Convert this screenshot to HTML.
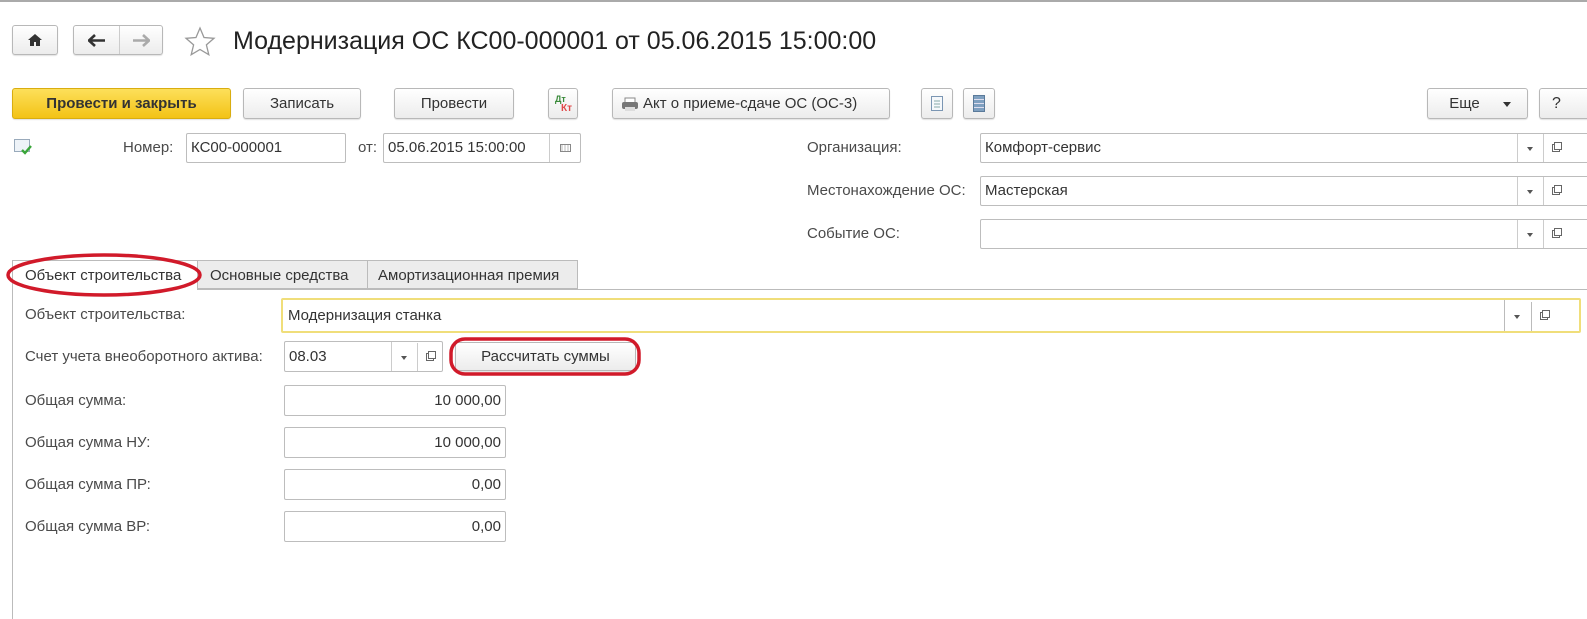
<!DOCTYPE html>
<html><head><meta charset="utf-8"><style>
*{box-sizing:border-box;margin:0;padding:0}
body{width:1587px;height:616px;background:#fff;font-family:"Liberation Sans",Arial,sans-serif;color:#333;font-size:15px;position:relative;overflow:hidden}
.a{position:absolute}
.btn{position:absolute;border:1px solid #b8b8b8;border-radius:3px;background:linear-gradient(#fff,#ececec);text-align:center;color:#333;box-shadow:0 1px 1px rgba(0,0,0,.12)}
.inp{position:absolute;border:1px solid #bdbdbd;border-radius:2px;background:#fff;padding-left:4px;color:#333}
.lbl{position:absolute;color:#4a4a4a}
.dd{position:absolute;top:0;bottom:0;border-left:1px solid #ccc;width:25px}
.dd:after{content:"";position:absolute;left:9px;top:50%;margin-top:-1px;border:3px solid transparent;border-top:4px solid #555}
.op{position:absolute;top:0;bottom:0;border-left:1px solid #ccc;width:24px}
.op:before{content:"";position:absolute;left:8px;top:10px;width:6px;height:6px;border:1px solid #666}
.op:after{content:"";position:absolute;left:10px;top:8px;width:6px;height:6px;border:1px solid #666;background:#fff}
</style></head><body>
<div class="a" style="left:0;top:0;width:1587px;height:2px;background:#aaa"></div>
<div class="btn" style="left:12px;top:25px;width:46px;height:30px"><svg width="16" height="14" viewBox="0 0 16 14" style="margin-top:7px"><path d="M8 1L1 7h2v6h4V9h2v4h4V7h2z" fill="#333"/></svg></div>
<div class="btn" style="left:73px;top:25px;width:90px;height:30px"><span style="position:absolute;left:45px;top:0;bottom:0;border-left:1px solid #ccc"></span>
<svg class="a" style="left:14px;top:8px" width="18" height="13"><path d="M1 6.5h16M7 1L1 6.5 7 12" stroke="#333" stroke-width="2.6" fill="none"/></svg>
<svg class="a" style="left:58px;top:8px" width="18" height="13"><path d="M1 6.5h16M11 1l6 5.5-6 5.5" stroke="#aaa" stroke-width="2.6" fill="none"/></svg></div>
<svg class="a" style="left:184px;top:26px" width="32" height="30" viewBox="0 0 32 30"><path d="M16 2l4 9.5 10 .8-7.6 6.6 2.4 9.8L16 23.5 7.2 28.7l2.4-9.8L2 12.3l10-.8z" fill="none" stroke="#999" stroke-width="1.3"/></svg>
<div class="a" style="left:233px;top:27px;font-size:25px;color:#222">Модернизация ОС КС00-000001 от 05.06.2015 15:00:00</div>

<div class="btn" style="left:12px;top:88px;width:219px;height:31px;background:linear-gradient(#fde05a,#f3c316);border-color:#d9ad10;font-weight:bold;color:#333;line-height:29px">Провести и закрыть</div>
<div class="btn" style="left:243px;top:88px;width:118px;height:31px;line-height:29px">Записать</div>
<div class="btn" style="left:394px;top:88px;width:120px;height:31px;line-height:29px">Провести</div>
<div class="btn" style="left:548px;top:88px;width:30px;height:31px"><span class="a" style="left:6px;top:5px;font-size:9px;color:#3a8a3a;font-weight:bold">Дт</span><span class="a" style="left:12px;top:14px;font-size:10px;color:#e04a4a;font-weight:bold">Кт</span></div>
<div class="btn" style="left:612px;top:88px;width:278px;height:31px;line-height:29px;text-align:left;padding-left:30px"><svg class="a" style="left:8px;top:8px" width="18" height="15"><rect x="4" y="1" width="10" height="5" fill="#fff" stroke="#888"/><rect x="1" y="5" width="16" height="7" rx="2" fill="#777"/><rect x="4" y="10" width="10" height="4" fill="#ddd"/></svg>Акт о приеме-сдаче ОС (ОС-3)</div>
<div class="btn" style="left:921px;top:88px;width:32px;height:31px"><svg style="margin-top:7px" width="12" height="15"><rect x=".5" y=".5" width="11" height="14" fill="#f5f8fb" stroke="#7b96b3"/><path d="M3 5h6M3 8h6M3 11h6" stroke="#8aa" /></svg></div>
<div class="btn" style="left:963px;top:88px;width:32px;height:31px"><svg style="margin-top:6px" width="12" height="17"><rect x=".5" y=".5" width="11" height="16" fill="#7fa0c0" stroke="#5a7a9a"/><path d="M1 4.5h10M1 8.5h10M1 12.5h10" stroke="#dde"/></svg></div>
<div class="btn" style="left:1427px;top:88px;width:101px;height:31px;line-height:29px;padding-right:26px">Еще<span class="a" style="right:16px;top:13px;border:4px solid transparent;border-top:5px solid #333"></span></div>
<div class="btn" style="left:1539px;top:88px;width:60px;height:31px;line-height:29px;text-align:left;padding-left:12px;font-size:16px">?</div>

<svg class="a" style="left:14px;top:139px" width="20" height="17"><rect x=".5" y=".5" width="15" height="12" fill="#eef3f8" stroke="#9ab"/><path d="M8 11l3 3 6-7" stroke="#3aa63a" stroke-width="2.4" fill="none"/></svg>
<div class="lbl" style="left:123px;top:139px">Номер:</div>
<div class="inp" style="left:186px;top:133px;width:160px;height:30px;line-height:28px">КС00-000001</div>
<div class="lbl" style="left:358px;top:139px">от:</div>
<div class="inp" style="left:383px;top:133px;width:198px;height:30px;line-height:28px">05.06.2015 15:00:00<span class="a" style="left:165px;top:0;bottom:0;border-left:1px solid #ccc;width:31px"><span class="a" style="left:10px;top:10px;width:11px;height:8px;border:1px solid #888;background:repeating-linear-gradient(90deg,#ddd 0 2px,#fff 2px 3px)"></span></span></div>

<div class="lbl" style="left:807px;top:139px">Организация:</div>
<div class="inp" style="left:980px;top:133px;width:640px;height:30px;line-height:28px">Комфорт-сервис<span class="dd" style="left:536px"></span><span class="op" style="left:562px"></span></div>
<div class="lbl" style="left:807px;top:182px">Местонахождение ОС:</div>
<div class="inp" style="left:980px;top:176px;width:640px;height:30px;line-height:28px">Мастерская<span class="dd" style="left:536px"></span><span class="op" style="left:562px"></span></div>
<div class="lbl" style="left:807px;top:225px">Событие ОС:</div>
<div class="inp" style="left:980px;top:219px;width:640px;height:30px"><span class="dd" style="left:536px"></span><span class="op" style="left:562px"></span></div>

<div class="a" style="left:12px;top:289px;width:1575px;border-top:1px solid #bbb"></div>
<div class="a" style="left:12px;top:289px;height:330px;border-left:1px solid #bbb"></div>
<div class="a" style="left:12px;top:260px;width:186px;height:30px;border:1px solid #bbb;border-bottom:none;background:#fff;padding:6px 0 0 12px">Объект строительства</div>
<div class="a" style="left:198px;top:260px;width:170px;height:29px;border:1px solid #bbb;border-left:none;background:#ececec;padding:6px 0 0 12px">Основные средства</div>
<div class="a" style="left:367px;top:260px;width:211px;height:29px;border:1px solid #bbb;background:#ececec;padding:6px 0 0 10px">Амортизационная премия</div>

<div class="lbl" style="left:25px;top:306px">Объект строительства:</div>
<div class="inp" style="left:281px;top:298px;width:1300px;height:35px;line-height:31px;border:2px solid #f0de7a;padding-left:5px">Модернизация станка<span class="dd" style="left:1221px;border-color:#bbb"></span><span class="op" style="left:1248px;top:2px;border-color:#bbb"></span></div>

<div class="lbl" style="left:25px;top:348px">Счет учета внеоборотного актива:</div>
<div class="inp" style="left:284px;top:341px;width:159px;height:31px;line-height:29px">08.03<span class="dd" style="left:106px"></span><span class="op" style="left:132px;top:1px"></span></div>
<div class="btn" style="left:455px;top:342px;width:181px;height:29px;line-height:27px">Рассчитать суммы</div>

<div class="lbl" style="left:25px;top:392px">Общая сумма:</div>
<div class="inp" style="left:284px;top:385px;width:222px;height:31px;line-height:29px;text-align:right;padding-right:4px">10 000,00</div>
<div class="lbl" style="left:25px;top:434px">Общая сумма НУ:</div>
<div class="inp" style="left:284px;top:427px;width:222px;height:31px;line-height:29px;text-align:right;padding-right:4px">10 000,00</div>
<div class="lbl" style="left:25px;top:476px">Общая сумма ПР:</div>
<div class="inp" style="left:284px;top:469px;width:222px;height:31px;line-height:29px;text-align:right;padding-right:4px">0,00</div>
<div class="lbl" style="left:25px;top:518px">Общая сумма ВР:</div>
<div class="inp" style="left:284px;top:511px;width:222px;height:31px;line-height:29px;text-align:right;padding-right:4px">0,00</div>

<svg class="a" style="left:0;top:0;pointer-events:none" width="1587" height="616">
<ellipse cx="104" cy="275" rx="96" ry="20" fill="none" stroke="#d11a2a" stroke-width="3.5"/>
<rect x="451" y="339" width="188" height="35" rx="14" fill="none" stroke="#d11a2a" stroke-width="3.5"/>
</svg>
</body></html>
